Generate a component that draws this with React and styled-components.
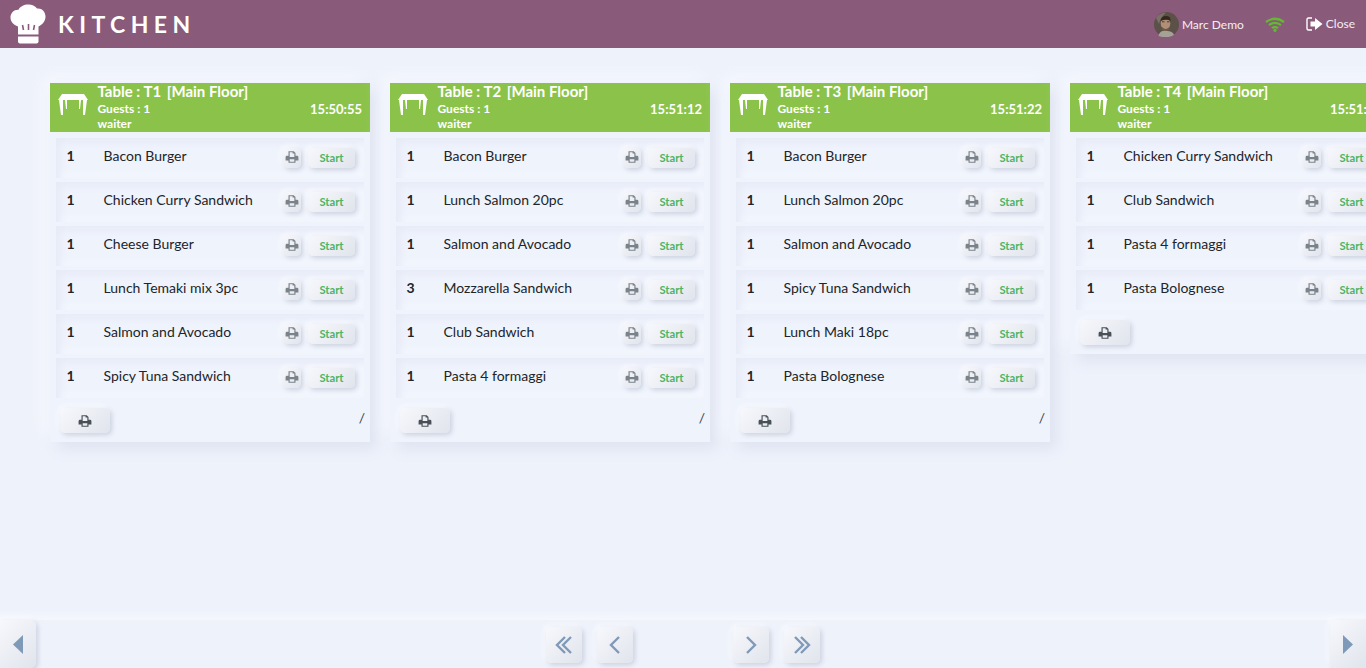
import React from "react";
import styled, { createGlobalStyle } from "styled-components";

const Global = createGlobalStyle`
  html, body { margin: 0; padding: 0; height: 100%; overflow: hidden; }
  body { background: #eef2fb; font-family: Lato, "Liberation Sans", sans-serif; color: #212529; }
  #root { height: 100%; }
`;

const Page = styled.div`
  height: 100vh;
  display: flex;
  flex-direction: column;
  overflow: hidden;
`;
const TopBar = styled.header`
  flex: none;
  height: 48px;
  background: #8a5a7a;
  display: flex;
  align-items: center;
  padding: 0 10px;
  color: #fff;
`;
const Brand = styled.div`
  font-size: 23px;
  font-weight: 700;
  letter-spacing: 5.4px;
  margin-left: 12px;
  flex: 1;
  line-height: 52px;
`;
const UserName = styled.span`
  font-size: 12px;
  margin-left: 3px;
  color: #f4eef2;
`;
const WifiSlot = styled.span`
  display: flex;
  margin-left: 21px;
  color: #63b931;
`;
const CloseLink = styled.span`
  display: flex;
  align-items: center;
  gap: 3px;
  font-size: 12px;
  margin-left: 21px;
  margin-right: 1px;
  margin-top: -1px;
  color: #f4eef2;
`;
const Board = styled.main`
  flex: 1;
  display: flex;
  align-items: flex-start;
  gap: 20px;
  padding: 35px 0 0 50px;
  overflow: hidden;
`;
const Card = styled.section`
  flex: none;
  width: 320px;
  background: #eff3fc;
  box-shadow: 7px 7px 14px #dee3f0, -7px -7px 14px #f6f8fe;
`;
const CardHead = styled.div`
  height: 49px;
  background: #8bc34a;
  color: #fff;
  display: flex;
  padding-left: 8px;
  padding-right: 8px;
`;
const TableIcon = styled.svg`
  width: 30px;
  height: 22px;
  margin-top: 11px;
  flex: none;
`;
const HeadText = styled.div`
  margin-left: 9.5px;
  flex: 1;
  font-weight: 700;
  font-size: 12px;
  line-height: 15px;
`;
const HeadTitle = styled.div`
  font-size: 15px;
  line-height: 16px;
  padding-bottom: 2px;
  font-weight: 700;
`;
const Location = styled.span`
  padding-left: 2px;
`;
const Time = styled.div`
  font-size: 13px;
  font-weight: 700;
  line-height: 15px;
  margin-top: 19px;
`;
const Rows = styled.div`
  padding: 6px 6px 0;
  display: flex;
  flex-direction: column;
  gap: 4px;
`;
const Row = styled.div`
  height: 40px;
  display: flex;
  background: #eff3fc;
  box-shadow: inset 4px 4px 8px #e6eaf6, inset -4px -4px 8px #f5f8ff;
`;
const Qty = styled.div`
  width: 47.5px;
  padding-left: 10.5px;
  box-sizing: border-box;
  font-weight: 700;
  line-height: 35px;
  font-size: 14px;
`;
const ItemName = styled.div`
  flex: 1;
  line-height: 35px;
  font-size: 14px;
`;
const ItemActions = styled.div`
  display: flex;
  gap: 7px;
  padding: 10px 9px 0 0;
`;
const raised = `
  background: linear-gradient(135deg, #f7f8fc, #e0e4ec);
  box-shadow: 2px 2px 5px #cbd1df, -2px -2px 5px #fafbff;
`;
const SmallPrint = styled.button`
  ${raised}
  border: 0;
  padding: 0 0 2px;
  width: 18px;
  height: 20px;
  border-radius: 5px;
  color: #7a828a;
  display: flex;
  align-items: center;
  justify-content: center;
`;
const StartButton = styled.button`
  ${raised}
  border: 0;
  padding: 0 0 2px;
  width: 47px;
  height: 20px;
  border-radius: 5px;
  font: 700 11.2px Lato, sans-serif;
  color: #4cb464;
`;
const CardFoot = styled.div`
  display: flex;
  justify-content: space-between;
  align-items: flex-start;
  padding: 10px 5px 9px 10px;
`;
const BigPrint = styled.button`
  ${raised}
  border: 0;
  padding: 0;
  width: 50px;
  height: 25px;
  border-radius: 5px;
  color: #495057;
  display: flex;
  align-items: center;
  justify-content: center;
`;
const Slash = styled.span`
  font-size: 14px;
  line-height: 16px;
  margin-top: 2px;
  color: #444;
`;
const Footer = styled.footer`
  flex: none;
  height: 58px;
  background: linear-gradient(#eef2fb 0, #f5f7fd 10px, #eef2fb 10px);
  display: flex;
  justify-content: space-between;
  align-items: flex-end;
`;
const EdgeButton = styled.button`
  ${raised}
  border: 0;
  padding: 0;
  width: 36px;
  height: 48px;
  border-radius: ${(p) => (p.$right ? "6px 0 0 6px" : "0 6px 6px 0")};
  color: #7f9ab8;
  display: flex;
  align-items: center;
  justify-content: center;
`;
const Pager = styled.div`
  display: flex;
  gap: 15px;
  align-self: flex-start;
  margin-top: 17px;
`;
const PagerGap = styled.div`
  width: 70px;
`;
const PagerButton = styled.button`
  ${raised}
  border: 0;
  padding: 0;
  width: 36px;
  height: 36px;
  border-radius: 5px;
  color: #7f9ab8;
  display: flex;
  align-items: center;
  justify-content: center;
`;

const PrintIcon = ({ size }) => (
  <svg width={size} height={size} viewBox="0 0 24 24" fill="currentColor" aria-hidden="true">
    <path fillRule="evenodd" d="M6 2h9l3 3v5h2.500A2.500 2.500 0 0 1 23 12.500V18h-5v4H6v-4H1v-5.500A2.500 2.500 0 0 1 3.500 10H6V2zm2 2v8h8V6h-3V4H8zm0 12v4h8v-4H8z" />
  </svg>
);
const ChefHat = () => (
  <svg width="36" height="40" viewBox="0 0 36 40" fill="#fff" aria-hidden="true">
    <path d="M8 30.500V22.500C3.500 21 0.500 17.500 0.500 13.500C0.500 9 4 5.500 8.500 5.800C10 2.500 14 0.500 18.500 0.500C22 0.500 25 1.800 27 4.500C31.500 3.800 35.500 7.500 35.500 12.500C35.500 17 32.500 20.800 28.500 22.500V30.500Z" />
    <path d="M8 32.500H28.500V37.500Q28.500 39.500 26.500 39.500H10Q8 39.500 8 37.500Z" />
    <path d="M12.500 21l1 5M18.500 20v6M24.500 21l-1 5" stroke="#8a5a7a" strokeWidth="1.600" />
  </svg>
);
const Avatar = () => (
  <svg width="25" height="25" viewBox="0 0 25 25" aria-hidden="true">
    <circle cx="12.500" cy="12.500" r="12.500" fill="#5b5148" />
    <path d="M2 6Q5 1 12 0.500Q6 6 5 12Z" fill="#7a7268" />
    <ellipse cx="11.500" cy="11.500" rx="4.800" ry="6" fill="#b08f76" />
    <path d="M6.500 9Q7 4 12 4Q17 4 16.500 9Q13 6.500 6.500 9Z" fill="#33291f" />
    <path d="M8 9.800h2.500M13 9.800h2.500" stroke="#3e3028" strokeWidth="0.900" />
    <path d="M8 15Q11.500 19 15.500 15V17.500L11.500 19.500L8 17.500Z" fill="#6e5645" />
    <path d="M4.500 24Q5 19.500 10 18.800L14 19Q19 19.500 20 23Q13 27 4.500 24Z" fill="#a5a196" />
  </svg>
);
const Wifi = () => (
  <svg width="20" height="15" viewBox="0 0 20 15" fill="none" stroke="currentColor" strokeWidth="2.300" aria-hidden="true">
    <path d="M1 5Q10 -1.500 19 5M4 8.200Q10 3.500 16 8.200M7 11.200Q10 8.700 13 11.200" />
    <circle cx="10" cy="13.300" r="1.600" fill="currentColor" stroke="none" />
  </svg>
);
const SignOut = () => (
  <svg width="17" height="14" viewBox="0 0 17 14" fill="#fff" aria-hidden="true">
    <path d="M6 1H2.500Q1 1 1 2.500V11.500Q1 13 2.500 13H6" fill="none" stroke="#fff" strokeWidth="1.400" />
    <path d="M4.500 4.500H9V1L16.500 7L9 13V9.500H4.500Z" />
  </svg>
);
const Chevron = ({ dir, double }) => {
  const pts = (x) => (dir === "left" ? `M${x + 8} 2L${x} 10L${x + 8} 18` : `M${x} 2L${x + 8} 10L${x} 18`);
  return (
    <svg width={double ? 18 : 12} height="20" viewBox={double ? "0 0 18 20" : "0 0 12 20"} fill="none" stroke="currentColor" strokeWidth="2.400" aria-hidden="true">
      <path d={pts(2)} />
      {double && <path d={pts(8)} />}
    </svg>
  );
};
const Caret = ({ dir }) => (
  <svg width="10" height="19" viewBox="0 0 10 19" fill="currentColor" aria-hidden="true">
    <path d={dir === "left" ? "M10 0V19L0 9.500Z" : "M0 0V19L10 9.500Z"} />
  </svg>
);

const orders = [
  { t: "T1", time: "15:50:55", slash: true, items: [[1, "Bacon Burger"], [1, "Chicken Curry Sandwich"], [1, "Cheese Burger"], [1, "Lunch Temaki mix 3pc"], [1, "Salmon and Avocado"], [1, "Spicy Tuna Sandwich"]] },
  { t: "T2", time: "15:51:12", slash: true, items: [[1, "Bacon Burger"], [1, "Lunch Salmon 20pc"], [1, "Salmon and Avocado"], [3, "Mozzarella Sandwich"], [1, "Club Sandwich"], [1, "Pasta 4 formaggi"]] },
  { t: "T3", time: "15:51:22", slash: true, items: [[1, "Bacon Burger"], [1, "Lunch Salmon 20pc"], [1, "Salmon and Avocado"], [1, "Spicy Tuna Sandwich"], [1, "Lunch Maki 18pc"], [1, "Pasta Bolognese"]] },
  { t: "T4", time: "15:51:30", slash: false, items: [[1, "Chicken Curry Sandwich"], [1, "Club Sandwich"], [1, "Pasta 4 formaggi"], [1, "Pasta Bolognese"]] },
];

const OrderCard = ({ order }) => (
  <Card>
    <CardHead>
      <TableIcon viewBox="0 0 30 22" fill="#fff" aria-hidden="true">
        <path d="M4 0H26L30 6H0Z" />
        <path d="M1 6H5V21H3ZM25 6H29L27 21H25Z" />
        <path d="M7 6H9V15H8ZM21 6H23L22 15H21Z" />
      </TableIcon>
      <HeadText>
        <HeadTitle>Table : {order.t} <Location>[Main Floor]</Location></HeadTitle>
        <div>Guests : 1</div>
        <div>waiter</div>
      </HeadText>
      <Time>{order.time}</Time>
    </CardHead>
    <Rows>
      {order.items.map(([q, n]) => (
        <Row key={n}>
          <Qty>{q}</Qty>
          <ItemName>{n}</ItemName>
          <ItemActions>
            <SmallPrint><PrintIcon size={14} /></SmallPrint>
            <StartButton>Start</StartButton>
          </ItemActions>
        </Row>
      ))}
    </Rows>
    <CardFoot>
      <BigPrint><PrintIcon size={14} /></BigPrint>
      {order.slash && <Slash>/</Slash>}
    </CardFoot>
  </Card>
);

export default function App() {
  return (
    <Page>
      <Global />
      <TopBar>
        <ChefHat />
        <Brand>KITCHEN</Brand>
        <Avatar />
        <UserName>Marc Demo</UserName>
        <WifiSlot><Wifi /></WifiSlot>
        <CloseLink><SignOut />Close</CloseLink>
      </TopBar>
      <Board>
        {orders.map((o) => <OrderCard key={o.t} order={o} />)}
      </Board>
      <Footer>
        <EdgeButton><Caret dir="left" /></EdgeButton>
        <Pager>
          <PagerButton><Chevron dir="left" double /></PagerButton>
          <PagerButton><Chevron dir="left" /></PagerButton>
          <PagerGap />
          <PagerButton><Chevron dir="right" /></PagerButton>
          <PagerButton><Chevron dir="right" double /></PagerButton>
        </Pager>
        <EdgeButton $right><Caret dir="right" /></EdgeButton>
      </Footer>
    </Page>
  );
}
